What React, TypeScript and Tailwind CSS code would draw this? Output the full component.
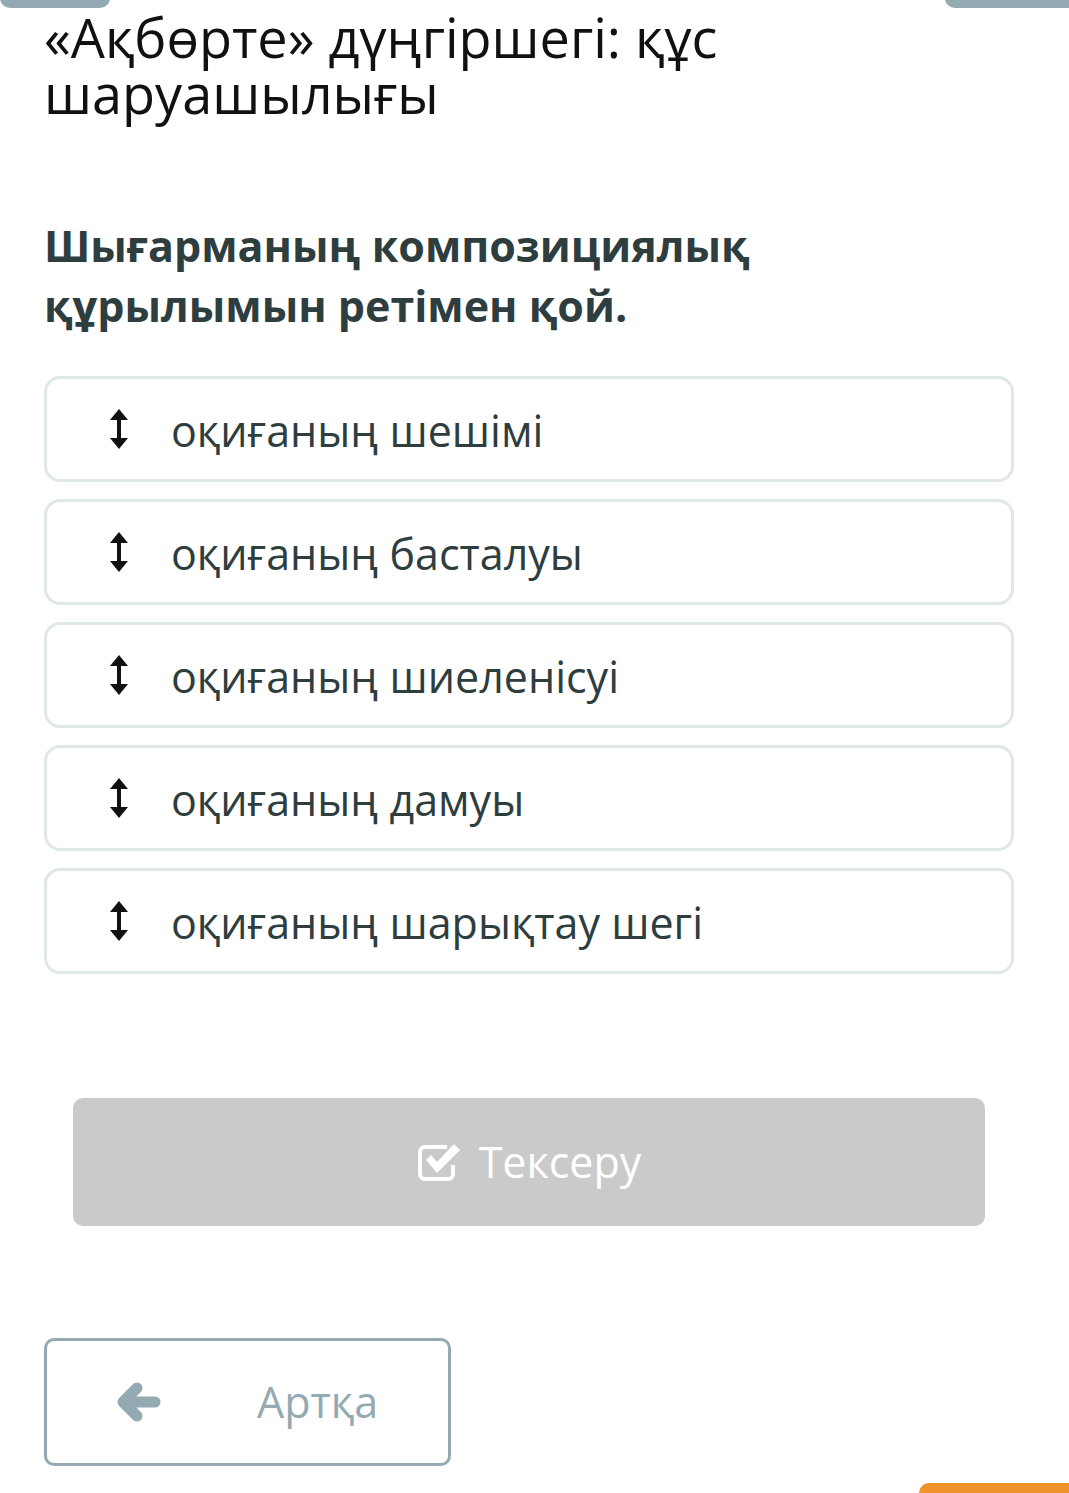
import React from "react";

const items = [
  "оқиғаның шешімі",
  "оқиғаның басталуы",
  "оқиғаның шиеленісуі",
  "оқиғаның дамуы",
  "оқиғаның шарықтау шегі",
];

function UpDown() {
  return (
    <svg width="20" height="42" viewBox="0 0 20 42">
      <polygon points="10,1 19,12 1,12" fill="#111" />
      <rect x="8" y="10" width="4" height="22" fill="#111" />
      <polygon points="10,41 19,30 1,30" fill="#111" />
    </svg>
  );
}

function CheckSquare() {
  return (
    <svg width="46" height="42" viewBox="0 0 46 42">
      <path
        d="M30 6 H8 a5 5 0 0 0 -5 5 V33 a5 5 0 0 0 5 5 H31 a5 5 0 0 0 5 -5 V24"
        fill="none"
        stroke="#fff"
        strokeWidth="4"
      />
      <path d="M9 19 L14 14 L20 21 L37 3 L43 9 L20 32 Z" fill="#fff" />
    </svg>
  );
}

function ArrowLeft() {
  return (
    <svg width="44" height="40" viewBox="0 0 44 40">
      <path
        d="M20 6 L6 20 L20 34 M6 20 H38"
        fill="none"
        stroke="#93aab2"
        strokeWidth="11"
        strokeLinecap="round"
        strokeLinejoin="round"
      />
    </svg>
  );
}

export default function App() {
  return (
    <div
      className="relative w-[1069px] h-[1493px] overflow-hidden bg-white"
      style={{ fontFamily: '"Open Sans", "Noto Sans", sans-serif' }}
    >
      <div className="absolute left-0 top-[-10px] w-[110px] h-[18px] rounded-b-[10px] bg-[#93aab2]" />
      <div className="absolute right-0 top-[-10px] w-[124px] h-[18px] rounded-bl-[10px] bg-[#93aab2]" />
      <div className="absolute right-0 top-[1483px] w-[150px] h-[30px] rounded-tl-[10px] bg-[#f0932b]" />

      <div className="flex flex-col pl-[44px] pr-[55px] pt-[9px]">
        <h1 className="text-[54px] leading-[56px] text-[#111] font-normal">
          «Ақбөрте» дүңгіршегі: құс
          <br />
          шаруашылығы
        </h1>

        <p className="mt-[95px] text-[43px] leading-[60px] font-bold text-[#2e3d3e]">
          Шығарманың композициялық
          <br />
          құрылымын ретімен қой.
        </p>

        <div className="mt-[40px] flex flex-col gap-[17px]">
          {items.map((t) => (
            <div
              key={t}
              className="h-[106px] rounded-[16px] border-[3px] border-[#dfe8e6] flex items-center pl-[62px]"
            >
              <UpDown />
              <span className="ml-[42px] text-[43px] text-[#2e3d3e] translate-y-[2px]">{t}</span>
            </div>
          ))}
        </div>

        <div className="mt-[124px] mx-[29px] h-[128px] rounded-[10px] bg-[#cacaca] flex items-center justify-center gap-[16px]">
          <CheckSquare />
          <span className="text-[43px] text-white">Тексеру</span>
        </div>

        <div className="mt-[112px] w-[407px] h-[128px] rounded-[10px] border-[3px] border-[#93aab2] flex items-center pl-[70px]">
          <ArrowLeft />
          <span className="ml-[96px] text-[43px] text-[#93aab2]">Артқа</span>
        </div>
      </div>
    </div>
  );
}
